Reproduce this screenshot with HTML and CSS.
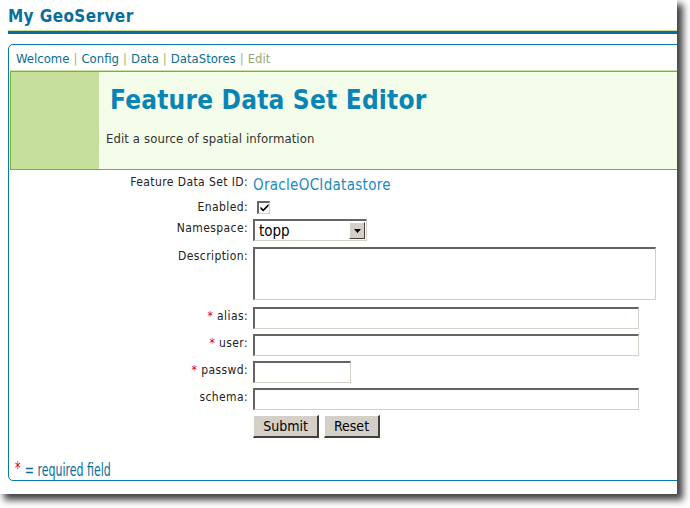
FILE: index.html
```html
<!DOCTYPE html>
<html>
<head>
<meta charset="utf-8">
<title>My GeoServer</title>
<link rel="stylesheet" href="styles.css">
</head>
<body>
<div class="window">
  <div class="brand">My GeoServer</div>
  <div class="brand-rule"></div>
  <div class="panel">
    <nav class="crumbs">
      <a href="#">Welcome</a><span class="sep">|</span><a href="#">Config</a><span class="sep">|</span><a href="#">Data</a><span class="sep">|</span><a href="#">DataStores</a><span class="sep">|</span><span class="current">Edit</span>
    </nav>
    <div class="header">
      <div class="header-side"></div>
      <div class="header-main">
        <h1>Feature Data Set Editor</h1>
        <p>Edit a source of spatial information</p>
      </div>
    </div>
    <form class="form">
      <label class="lbl row-id lbl-id">Feature Data Set ID:</label>
      <div class="val row-id"><span class="dsid">OracleOCIdatastore</span></div>

      <label class="lbl row-en lbl-en">Enabled:</label>
      <div class="val row-en"><span class="check"><svg width="9" height="9" viewBox="0 0 9 9"><path d="M0.5 3.5 L3.2 6.2 L8.5 0.8 L8.5 3.2 L3.2 8.6 L0.5 5.9 Z" fill="#000"/></svg></span></div>

      <label class="lbl">Namespace:</label>
      <div class="val"><div class="select"><span class="sel-text">topp</span><span class="sel-btn"><svg width="7" height="4" viewBox="0 0 7 4"><path d="M0 0 H7 L3.5 4 Z" fill="#000"/></svg></span></div></div>

      <label class="lbl lbl-top row-desc">Description:</label>
      <div class="val row-desc"><div class="field textarea"></div></div>

      <label class="lbl row-alias"><span class="req">*</span> alias:</label>
      <div class="val row-alias"><div class="field wide"></div></div>

      <label class="lbl"><span class="req">*</span> user:</label>
      <div class="val"><div class="field wide"></div></div>

      <label class="lbl"><span class="req">*</span> passwd:</label>
      <div class="val"><div class="field short"></div></div>

      <label class="lbl">schema:</label>
      <div class="val"><div class="field wide"></div></div>

      <div class="lbl"></div>
      <div class="val buttons"><span class="btn btn-submit">Submit</span><span class="btn btn-reset">Reset</span></div>
    </form>
    <div class="legend"><span class="req legend-star">*</span> = required field</div>
  </div>
</div>
</body>
</html>
```

FILE: styles.css
```css
html, body {
  margin: 0;
  padding: 0;
  background: #fff;
}
body {
  width: 690px;
  height: 508px;
  overflow: hidden;
  font-family: "DejaVu Sans Condensed", "DejaVu Sans", sans-serif;
}
.window {
  width: 677px;
  height: 494px;
  background: #fff;
  box-shadow: 5px 5px 7px 1px rgba(0, 0, 0, 0.75);
  overflow: hidden;
  padding-left: 8px;
  box-sizing: border-box;
}
.brand {
  padding-top: 6px;
  height: 24px;
  font-weight: bold;
  font-size: 17px;
  letter-spacing: 0.4px;
  line-height: 20px;
  color: #0a6e9a;
}
.brand-rule {
  height: 3px;
  border-top: 1px solid #c5e09c;
  background: #0a6e9a;
}
.panel {
  margin-top: 10px;
  width: 720px;
  height: 437px;
  box-sizing: border-box;
  border: 1px solid #0a7aa8;
  border-radius: 5px 0 0 5px;
  position: relative;
}
.crumbs {
  height: 25px;
  padding-left: 7px;
  padding-top: 5px;
  box-sizing: border-box;
  font-size: 13px;
  line-height: 17px;
}
.crumbs a {
  color: #0a6e8e;
  text-decoration: none;
}
.crumbs .sep {
  color: #9ab86c;
  margin: 0 4px;
}
.crumbs .current {
  color: #9aa878;
}
.header {
  border-top: 1px solid #cfe6a8;
  margin-left: 1px;
  display: flex;
  height: 100px;
  box-sizing: border-box;
}
.header-side {
  width: 88px;
  background: #c6df9c;
  border: 1px solid #74b626;
  border-right: 0;
}
.header-main {
  flex: 1;
  background: #f4fde9;
  border: 1px solid #74b626;
  border-left: 0;
}
.header-main h1 {
  margin: 14px 0 0 11px;
  font-size: 26px;
  letter-spacing: 0.2px;
  line-height: 28px;
  color: #0a84b5;
  font-weight: bold;
}
.header-main p {
  margin: 17px 0 0 7px;
  font-size: 13px;
  letter-spacing: 0.1px;
  line-height: 16px;
  color: #333;
}
.form {
  display: grid;
  grid-template-columns: 239px auto;
  column-gap: 5px;
  row-gap: 5px;
  padding-top: 5px;
  font-size: 12px;
  color: #222;
  align-items: center;
}
.lbl {
  box-sizing: border-box;
  text-align: right;
  line-height: 15px;
  letter-spacing: 0.4px;
  padding-bottom: 3px;
}
.lbl-id {
  align-self: end;
  padding-bottom: 2px;
}
.lbl-en {
  padding-bottom: 0;
  line-height: 14px;
}
.lbl-top {
  align-self: start;
  padding-top: 2px;
}
.val {
  display: flex;
  align-items: center;
}
.row-id {
  height: 20px;
}
.row-en {
  height: 14px;
}
.row-desc {
  margin-top: 1px;
}
.row-alias {
  margin-top: 2px;
}
.dsid {
  font-size: 15px;
  letter-spacing: 0.3px;
  color: #1a8ac0;
  line-height: 18px;
}
.check {
  display: flex;
  align-items: center;
  justify-content: center;
  width: 13px;
  height: 13px;
  box-sizing: border-box;
  border-style: solid;
  border-width: 2px 1px 1px 2px;
  border-color: #666 #d4d0c8 #d4d0c8 #666;
  background: #fff;
  margin-left: 4px;
}
.select {
  display: flex;
  align-items: center;
  width: 114px;
  height: 22px;
  box-sizing: border-box;
  border-style: solid;
  border-width: 2px 1px 1px 2px;
  border-color: #666 #d4d0c8 #d4d0c8 #666;
  background: #fff;
}
.sel-text {
  flex: 1;
  font-size: 15px;
  padding-left: 4px;
  color: #000;
}
.sel-btn {
  width: 16px;
  height: 17px;
  box-sizing: border-box;
  background: #d4d0c8;
  border-style: solid;
  border-width: 1px;
  border-color: #fff #404040 #404040 #fff;
  display: flex;
  align-items: center;
  justify-content: center;
  margin-right: 1px;
}
.field {
  height: 22px;
  box-sizing: border-box;
  border-style: solid;
  border-width: 2px 1px 1px 2px;
  border-color: #646464 #d4d0c8 #d4d0c8 #646464;
  background: #fff;
}
.textarea {
  width: 403px;
  height: 53px;
}
.wide {
  width: 386px;
}
.short {
  width: 98px;
}
.buttons {
  gap: 5px;
}
.btn {
  display: flex;
  align-items: center;
  justify-content: center;
  height: 23px;
  box-sizing: border-box;
  background: #d4d0c8;
  border-style: solid;
  border-width: 1px 2px 2px 1px;
  border-color: #fff #404040 #404040 #fff;
  font-size: 14px;
  color: #000;
}
.btn-submit {
  width: 66px;
}
.btn-reset {
  width: 56px;
}
.req {
  color: #e00000;
}
.legend {
  position: absolute;
  left: 6px;
  bottom: 0;
  font-size: 17px;
  line-height: 20px;
  color: #0a6e9a;
  transform: scaleX(0.72);
  transform-origin: left bottom;
  white-space: nowrap;
}
.legend-star {
  position: relative;
  top: -2px;
  margin-right: 1px;
}
```
